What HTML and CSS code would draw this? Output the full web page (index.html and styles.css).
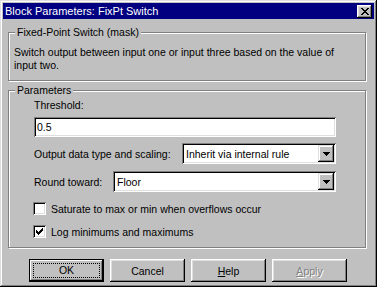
FILE: index.html
```html
<!DOCTYPE html>
<html lang="en">
<head>
    <meta charset="UTF-8">
    <title>Block Parameters: FixPt Switch</title>
    <link rel="stylesheet" href="styles.css">
</head>
<body>
    <div class="window">
        <div class="titlebar">
            <span class="title">Block Parameters: FixPt Switch</span>
            <span class="close">
                <svg width="8" height="7" viewBox="0 0 8 7" shape-rendering="crispEdges">
                    <path d="M0 0h2v1h1v1h2V1h1V0h2v1H7v1H6v1H5v1h1v1h1v1h1v1H6V6H5V5H3v1H2v1H0V6h1V5h1V4h1V3H2V2H1V1H0z" fill="#000"/>
                </svg>
            </span>
        </div>

        <!-- Description -->
        <div class="group desc">
            <span class="legend">Fixed-Point Switch (mask)</span>
            <p>Switch output between input one or input three based on the value of<br>input two.</p>
        </div>

        <!-- Parameters -->
        <div class="group params">
            <span class="legend">Parameters</span>
            <div class="label">Threshold:</div>
            <div class="field edit">0.5</div>

            <div class="row row-output">
                <span>Output data type and scaling:</span>
                <div class="field combo combo-output">
                    <span>Inherit via internal rule</span>
                    <span class="arrow"><svg width="7" height="4" viewBox="0 0 7 4" shape-rendering="crispEdges"><path d="M0 0h7v1H6v1H5v1H4v1H3V3H2V2H1V1H0z" fill="#000"/></svg></span>
                </div>
            </div>

            <div class="row row-round">
                <span>Round toward:</span>
                <div class="field combo combo-round">
                    <span>Floor</span>
                    <span class="arrow"><svg width="7" height="4" viewBox="0 0 7 4" shape-rendering="crispEdges"><path d="M0 0h7v1H6v1H5v1H4v1H3V3H2V2H1V1H0z" fill="#000"/></svg></span>
                </div>
            </div>

            <label class="check"><span class="box"></span>Saturate to max or min when overflows occur</label>
            <label class="check"><span class="box"><svg width="7" height="7" viewBox="0 0 7 7" shape-rendering="crispEdges"><path d="M6 0h1v3H6v1H5v1H4v1H3v1H2V6H1V5H0V2h1v1h1v1h1V3h1V2h1V1h1z" fill="#000"/></svg></span>Log minimums and maximums</label>
        </div>

        <!-- Buttons -->
        <div class="buttons">
            <button class="btn default"><span class="focus">OK</span></button>
            <button class="btn">Cancel</button>
            <button class="btn"><u>H</u>elp</button>
            <button class="btn disabled"><u>A</u>pply</button>
        </div>
    </div>
</body>
</html>
```

FILE: styles.css
```css
body {
    margin: 0;
    background: #fff;
    font-family: "Liberation Sans", Arial, sans-serif;
    font-size: 10.5px;
    color: #000;
}
.window {
    width: 377px;
    height: 287px;
    box-sizing: border-box;
    padding: 3px;
    background: #c0c0c0;
    box-shadow: inset -1px -1px #000, inset 1px 1px #dfdfdf, inset -2px -2px #808080, inset 2px 2px #fff;
    display: flex;
    flex-direction: column;
}
.titlebar {
    height: 16px;
    background: #000080;
    color: #fff;
    font-size: 11px;
    display: flex;
    align-items: center;
    justify-content: space-between;
    padding: 0 2px;
}
.title {
    line-height: 16px;
}
.close {
    width: 15px;
    height: 13px;
    box-sizing: border-box;
    background: #c0c0c0;
    box-shadow: inset -1px -1px #000, inset 1px 1px #fff, inset -2px -2px #808080, inset 2px 2px #dfdfdf;
    display: flex;
    align-items: center;
    justify-content: center;
}
.group {
    position: relative;
    width: 358px;
    box-sizing: border-box;
    margin-left: 5px;
    border: 1px solid #808080;
    box-shadow: inset 1px 1px #fff, 1px 1px #fff;
}
.legend {
    position: absolute; /* sits over the top edge of the group box */
    top: -7px;
    left: 6px;
    padding: 0 2px;
    line-height: 13px;
    background: #c0c0c0;
}
.desc {
    margin-top: 13px;
    padding: 13px 5px 8px 5px;
}
.desc p {
    margin: 0;
    line-height: 13px;
}
.params {
    margin-top: 9px;
    padding: 8px 0 9px 25px;
}
.label {
    line-height: 13px;
}
.field {
    box-sizing: border-box;
    background: #fff;
    box-shadow: inset 1px 1px #808080, inset -1px -1px #fff, inset 2px 2px #000, inset -2px -2px #dfdfdf;
}
.edit {
    width: 302px;
    height: 20px;
    margin-top: 5px;
    padding-left: 3px;
    line-height: 20px;
}
.row {
    width: 302px;
    display: flex;
    align-items: center;
    justify-content: space-between;
}
.row-output {
    margin-top: 6px;
}
.row-round {
    margin-top: 7px;
}
.combo {
    height: 21px;
    padding: 2px 2px 2px 4px;
    display: flex;
    align-items: center;
    justify-content: space-between;
}
.combo-output {
    width: 154px;
}
.combo-round {
    width: 223px;
}
.arrow {
    width: 16px;
    height: 17px;
    box-sizing: border-box;
    background: #c0c0c0;
    box-shadow: inset -1px -1px #000, inset 1px 1px #dfdfdf, inset -2px -2px #808080, inset 2px 2px #fff;
    display: flex;
    align-items: center;
    justify-content: center;
}
.check {
    display: flex;
    align-items: center;
    height: 13px;
    margin-top: 10px;
}
.box {
    width: 13px;
    height: 13px;
    box-sizing: border-box;
    margin-left: -1px;
    margin-right: 5px;
    background: #fff;
    box-shadow: inset 1px 1px #808080, inset -1px -1px #fff, inset 2px 2px #000, inset -2px -2px #dfdfdf;
    display: flex;
    align-items: center;
    justify-content: center;
}
.buttons {
    display: flex;
    gap: 6px;
    margin-top: 11px;
    padding-left: 26px;
}
.btn {
    width: 75px;
    height: 23px;
    padding: 0;
    border: none;
    background: #c0c0c0;
    font-family: inherit;
    font-size: 10.5px;
    color: #000;
    box-shadow: inset -1px -1px #000, inset 1px 1px #fff, inset -2px -2px #808080, inset 2px 2px #dfdfdf;
}
.btn.default {
    box-shadow: inset 0 0 0 1px #000, inset -2px -2px #000, inset 2px 2px #fff, inset -3px -3px #808080;
    display: flex;
    align-items: center;
    justify-content: center;
}
.focus {
    width: 67px;
    height: 15px;
    box-sizing: border-box;
    border: 1px dotted #000;
    line-height: 13px;
    text-align: center;
}
.btn.disabled {
    color: #808080;
    text-shadow: 1px 1px #fff;
}
```
